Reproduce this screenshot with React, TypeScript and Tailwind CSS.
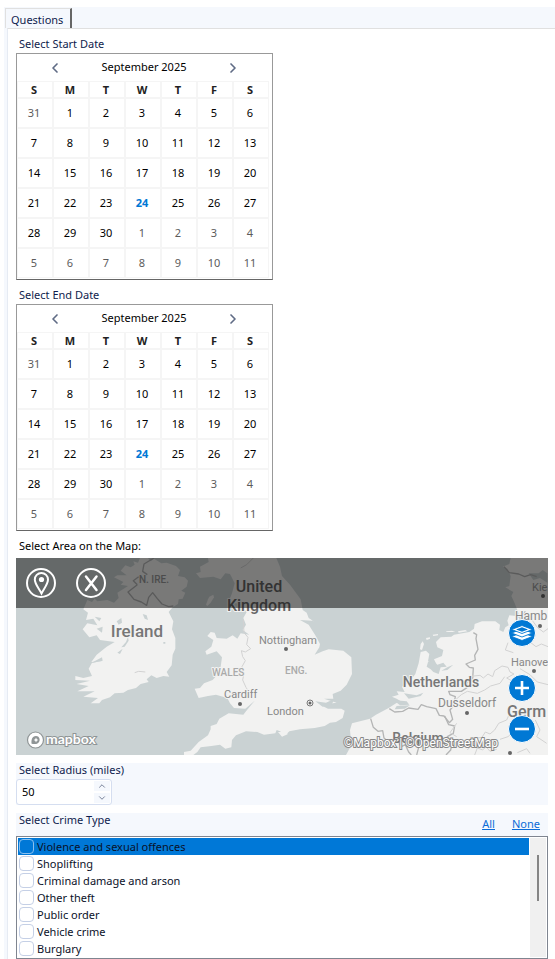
import { useState } from "react";
import { LuChevronDown, LuChevronLeft, LuChevronRight, LuChevronUp } from "react-icons/lu";

const WEEKDAYS = ["S", "M", "T", "W", "T", "F", "S"];
const WEEKS = [
  [31, 1, 2, 3, 4, 5, 6],
  [7, 8, 9, 10, 11, 12, 13],
  [14, 15, 16, 17, 18, 19, 20],
  [21, 22, 23, 24, 25, 26, 27],
  [28, 29, 30, 1, 2, 3, 4],
  [5, 6, 7, 8, 9, 10, 11],
];
const TODAY = 24;

const CRIMES = [
  "Violence and sexual offences",
  "Shoplifting",
  "Criminal damage and arson",
  "Other theft",
  "Public order",
  "Vehicle crime",
  "Burglary",
];

function dayStyle(week: number, day: number) {
  if ((week === 0 && day > 20) || (week > 3 && day < 15)) return "text-[#5c5c5c]";
  if (day === TODAY) return "font-bold text-[#0078d4]";
  return "text-black";
}

function Calendar({ label }: { label: string }) {
  return (
    <section aria-label={label}>
      <h2 className="px-[3px] pt-[7px] pb-px leading-4">{label}</h2>
      <div className="w-[257px] border border-[#999] border-b-[#666] pb-px">
        <div className="flex h-[27px] items-center justify-between pr-[31px] pl-[30px]">
          <button aria-label="Previous month" className="text-[#5f6b85]">
            <LuChevronLeft className="size-4" strokeWidth={2.5} />
          </button>
          <span className="text-black">September 2025</span>
          <button aria-label="Next month" className="text-[#5f6b85]">
            <LuChevronRight className="size-4" strokeWidth={2.5} />
          </button>
        </div>
        <table className="w-[252px] table-fixed border-separate border-spacing-0 text-center">
          <thead>
            <tr>
              {WEEKDAYS.map((day, i) => (
                <th key={i} className="h-[17px] border border-[#f5f5f5] p-0 pr-0.5 leading-[15px] font-bold text-[#222]">
                  {day}
                </th>
              ))}
            </tr>
          </thead>
          <tbody>
            {WEEKS.map((week, w) => (
              <tr key={w}>
                {week.map((day) => (
                  <td key={day} className="h-[30px] border border-[#f5f5f5] p-0 pr-0.5">
                    <button className={`h-7 w-full ${dayStyle(w, day)}`}>{day}</button>
                  </td>
                ))}
              </tr>
            ))}
          </tbody>
        </table>
      </div>
    </section>
  );
}

function MapDrawing() {
  return (
    <svg
      viewBox="0 0 532 197"
      preserveAspectRatio="xMidYMid slice"
      className="block h-full w-full bg-[#cad2d3]"
      fontFamily="Roboto, sans-serif"
      role="img"
      aria-label="Map of the British Isles and the Low Countries"
    >
      <g transform="translate(-16 -8) scale(0.33333)">
        <g fill="#f2f2f1">
          {/* Ireland */}
          <path d="M370 96L342 82L352 76L380 76L362 62L376 46L392 52L404 44L400 34L414 38L420 24H444L452 34L462 26L484 40L500 38L528 48L540 60L534 78L554 82L564 92L560 110L544 122L556 128L548 146L536 148L534 162L518 172L506 186L520 214L516 238L526 264L526 296L518 314L515 346L500 366L508 380L490 378L470 384L454 376L440 388L446 396L422 402L408 414L384 420L370 428L344 430L330 442L306 450L298 460L272 460L294 444L250 440L284 424L232 424L266 408L230 402L270 392L226 390V378L250 384L276 378L266 356L276 338L310 332L274 336L290 314L320 290L344 276L300 270L290 256L268 262L248 238L262 220L292 226L280 206L258 210L264 188L250 178L262 150L276 156L284 146L292 154L322 150L342 158L356 144L352 128L384 108L362 104Z" />
          {/* Scotland, England and Wales */}
          <path d="M600 84L588 70L602 66L600 50L626 36L624 24H829L840 50L846 78L870 104L886 126L902 148L908 180L920 188L926 204L944 216L938 212L900 210L926 224L946 256L960 282L958 292L944 314L968 304L986 298L1030 302L1054 322L1056 372L1040 404L1022 422L998 432L1000 446L972 446L1010 458L960 464L984 476L1024 476L1034 482L1028 504L1008 516L990 518L974 528L944 534L900 538L868 544L856 556L840 544L830 540L826 550L792 554L772 546L738 544L708 556L696 570L694 592L676 596L660 584L634 588L602 592L592 606L580 615H552L552 606L572 602L596 576L624 556L632 538L632 528L650 522L658 506L686 490L730 494L738 484L764 452L736 476L702 474L690 460L682 444L648 434L624 438L596 444L584 416L600 414L612 400L638 390L652 374L662 350L666 322L650 304L620 314L616 304L634 290L640 270L622 258L632 246L644 248L650 264L680 266L698 256L712 266L722 250L748 254L728 240L738 224L730 204L740 186L716 160L684 160L696 130L704 100L690 72L676 70L662 88L640 80Z" />
          <path d="M624 148L628 140L640 134L642 142L632 158L622 168L618 164Z" />
          {/* Continent */}
          <path d="M1038 615L1054 586L1050 540L1056 520L1110 506L1128 494L1166 474L1200 452L1190 446L1176 440L1196 434L1190 424L1214 426L1206 410L1226 398L1246 372L1256 340L1262 306L1278 302L1288 312L1284 334L1310 344L1302 328L1326 318L1330 300L1312 292L1308 276L1322 262L1354 260L1362 254L1408 246L1422 236L1424 222L1446 214L1486 214L1500 224L1498 240L1510 246L1516 232L1526 226L1522 212L1528 196L1548 198L1562 208L1552 180L1544 160L1534 138L1540 126L1516 112L1528 108L1532 78L1522 56L1508 50L1528 42L1532 24H1662V615Z" />
          <path d="M1262 282L1268 274L1272 282L1266 300L1260 298ZM1278 264L1290 262V266L1280 270ZM1298 254L1314 252V256L1300 258ZM1338 244L1356 242L1366 246H1340ZM1374 244L1396 240L1402 244L1376 248Z" />
          <path d="M834 546L856 546L864 552L846 560Z" />
        </g>
        {/* Inland water */}
        <g fill="#cad2d3">
          <path d="M1284 336L1298 330L1312 344L1330 338L1340 350L1322 352L1316 372L1300 366L1292 358L1280 350Z" />
          <path d="M1180 450L1220 454L1228 464L1200 466ZM1190 468L1230 466L1214 476L1184 478ZM1212 430L1250 436L1270 428L1262 438L1226 446ZM1360 344L1342 360L1324 362L1342 352Z" />
          <path d="M352 308L368 296L360 312ZM364 292L378 276L384 260L386 272L374 290ZM350 214L364 204L366 218L356 224ZM428 192L440 196L444 210L434 206ZM290 236L308 230L306 248ZM284 200L304 204L298 214ZM272 340L306 322L308 332ZM490 276H496V281H490ZM946 454L978 458L1004 446L996 462L968 470ZM1586 70L1600 90L1620 84L1642 98V70L1628 60L1616 70Z" />
        </g>
        {/* Borders */}
        <g fill="none" stroke="#b4b5b5" strokeWidth="4" strokeLinejoin="round">
          <path d="M462 24L432 42L428 64L442 74M412 104L400 92L416 80M412 104L384 126L402 148L424 156L440 166L446 142L458 128L472 146L486 162L506 170L520 168" />
          <path d="M1420 248L1430 254L1428 266L1434 298L1424 316L1426 330L1398 342L1408 352L1420 354L1418 386L1400 398L1402 412L1384 424L1346 424L1350 434L1366 440L1360 468L1350 480L1358 508L1348 518L1332 498L1318 496L1308 476L1280 470L1264 464L1254 478L1226 474L1208 484L1184 486L1168 476" />
          <path d="M1112 506L1120 532L1134 544L1148 542L1152 564L1166 576L1190 570L1204 590L1216 584L1226 606L1234 615M1250 615L1256 592L1276 582M1334 498L1346 524L1364 528L1360 550L1342 560L1356 580L1352 600L1338 615" />
          <path d="M1512 50L1528 68L1556 72L1574 80L1592 74L1610 80M1576 184L1568 196L1560 208" />
        </g>
        <g fill="none" stroke="#d2d2d2" strokeWidth="3" strokeLinejoin="round">
          <path d="M760 24L740 44L722 54M730 210L732 248L744 262L740 284L752 296L736 306L724 302L728 320L736 332L726 350L732 370L728 390L738 412L748 428M404 368L416 364L436 366M1404 380L1440 376L1450 384L1464 372L1478 380L1484 362L1506 348L1524 352L1530 366L1542 372L1520 384L1538 394L1530 402M1366 450L1384 434L1402 424L1432 430L1454 420L1472 408L1500 400L1514 380M1370 520L1350 548L1370 560M1402 600L1420 580L1418 566L1446 562L1456 546L1470 552L1484 540L1496 520L1520 510L1528 492M1424 615L1432 594L1448 600L1458 590L1470 604L1490 598M1500 568L1524 560L1540 546L1552 524M1552 608L1580 596L1590 610M1596 210L1612 232L1630 246L1644 236M1590 276L1608 290L1624 282L1644 290M1560 356L1590 374L1612 396L1644 404M1524 278L1516 300L1540 308M1606 510L1620 540L1610 560L1640 580" />
        </g>
      </g>
      <g fill="#777" stroke="#f2f2f1" strokeWidth="2" strokeLinejoin="round" paintOrder="stroke">
        <g fontSize="16" fontWeight="500" textAnchor="middle">
          <text x="121" y="79" fontSize="17">Ireland</text>
          <g fill="#666">
            <text x="243" y="34">United</text>
            <text x="243" y="53">Kingdom</text>
          </g>
          <text x="425" y="129" fontSize="14">Netherlands</text>
          <text x="402" y="185" fontSize="14">Belgium</text>
          <text x="491" y="159" fontSize="16" textAnchor="start">Germ</text>
        </g>
        <g fontSize="11" fill="#888">
          <text x="243" y="86">Nottingham</text>
          <text x="208" y="140">Cardiff</text>
          <text x="251" y="157">London</text>
          <text x="422" y="149" fontSize="12">Dusseldorf</text>
          <text x="495" y="108">Hanove</text>
          <text x="499" y="62" fontSize="12">Hamb</text>
        </g>
        <g fontSize="10" fontWeight="500" fill="#aaa">
          <text x="196" y="118">WALES</text>
          <text x="269" y="116">ENG.</text>
        </g>
      </g>
      <g fill="#999">
        <text x="123" y="25" fontSize="10" fontWeight="500">N. IRE.</text>
        <text x="516" y="33" fontSize="11">Kie</text>
      </g>
      <g fill="#666">
        <circle cx="270" cy="91" r="2" />
        <circle cx="224" cy="146" r="2" />
        <circle cx="451" cy="155" r="2" />
        <circle cx="518" cy="113" r="2" />
        <circle cx="524" cy="68" r="2" />
        <circle cx="527" cy="38" r="2" />
        <circle cx="494" cy="195" r="2" />
        <circle cx="294" cy="145" r="1.5" />
        <circle cx="294" cy="145" r="3" fill="none" stroke="#777" />
      </g>
    </svg>
  );
}

function CrimeMap() {
  return (
    <div className="relative h-[197px] overflow-hidden">
      <MapDrawing />
      <div className="absolute inset-x-0 top-0 flex h-[50px] items-center gap-5 bg-black/50 px-2.5">
        <button aria-label="Drop a pin">
          <svg viewBox="0 0 30 30" className="size-[30px]" fill="none" stroke="#fff" strokeWidth="2">
            <circle cx="15" cy="15" r="14" />
            <path d="M15.500 25.500C13 20.500 8.800 16 8.800 11.500A6.500 6.500 0 0 1 22 11.500C22 16 18 20.500 15.500 25.500Z" />
            <circle cx="15.500" cy="11.500" r="2.600" fill="#fff" stroke="none" />
          </svg>
        </button>
        <button aria-label="Clear the pin">
          <svg viewBox="0 0 30 30" className="size-[30px]" fill="none" stroke="#fff" strokeWidth="2" strokeLinecap="round">
            <circle cx="15" cy="15" r="14" />
            <path strokeWidth="2.500" d="M10 8.500L20.500 22M20.500 8.500L10 22" />
          </svg>
        </button>
      </div>
      <div className="absolute top-[61px] right-3 flex flex-col">
        <button aria-label="Layers">
          <svg viewBox="0 0 28 28" className="size-7">
            <circle cx="14" cy="14" r="13.500" fill="#0078d4" stroke="#fff" />
            <g fill="#fff" stroke="#0078d4" strokeWidth="0.900">
              <path d="M3.500 17.500L14 13.500L24.500 17.500L14 21.500Z" />
              <path d="M3.500 14L14 10L24.500 14L14 18Z" />
              <path d="M3.500 10.500L14 6.500L24.500 10.500L14 14.500Z" />
              <path d="M8 10.500L14 8.300L20 10.500L14 12.700Z" fill="#0078d4" stroke="none" />
            </g>
          </svg>
        </button>
        <button aria-label="Zoom in" className="mt-[27px]">
          <svg viewBox="0 0 28 28" className="size-7">
            <circle cx="14" cy="14" r="13.500" fill="#0078d4" stroke="#fff" />
            <path d="M7 14H21M14 7V21" stroke="#fff" strokeWidth="2.600" />
          </svg>
        </button>
        <button aria-label="Zoom out" className="mt-[13px]">
          <svg viewBox="0 0 28 28" className="size-7">
            <circle cx="14" cy="14" r="13.500" fill="#0078d4" stroke="#fff" />
            <path d="M7 14H21" stroke="#fff" strokeWidth="2.600" />
          </svg>
        </button>
      </div>
      <svg viewBox="0 0 74 20" className="absolute bottom-[5px] left-2.5 h-5 w-[74px]" aria-label="mapbox" role="img">
        <circle cx="9.500" cy="10" r="8" fill="#fff" stroke="#8f9596" strokeWidth="1.200" />
        <path d="M5.600 13.800C5 10 6 6.200 10 6C14 6.200 14.600 10.800 12.200 12.900C10.500 14.200 8 14.200 5.600 13.800Z" fill="#8f9596" />
        <path d="M10 7.600L10.800 9.200L12.400 10L10.800 10.800L10 12.400L9.200 10.800L7.600 10L9.200 9.200Z" fill="#fff" />
        <text
          x="20"
          y="14"
          fontSize="14"
          fontWeight="700"
          fontFamily="Lato, sans-serif"
          fill="#fff"
          stroke="#8f9596"
          strokeWidth="2"
          paintOrder="stroke"
        >
          mapbox
        </text>
      </svg>
      <p className="absolute right-[50px] bottom-1 font-['Roboto',sans-serif] text-[12px] leading-4 text-white [paint-order:stroke] [-webkit-text-stroke:2px_#888]">
        ©Mapbox | ©OpenStreetMap
      </p>
    </div>
  );
}

export default function App() {
  const [radius, setRadius] = useState(50);
  const [checked, setChecked] = useState<string[]>([]);

  function toggle(crime: string) {
    setChecked((prev) => (prev.includes(crime) ? prev.filter((c) => c !== crime) : [...prev, crime]));
  }

  return (
    <div className="flex min-h-screen flex-col bg-white pt-[7px] pl-1 font-['Noto_Sans','Open_Sans',sans-serif] text-[11px] text-[#0f1c4d]">
      <div role="tablist" className="flex h-[21px] items-end bg-[#f5f8fd] pl-px">
        <button
          role="tab"
          aria-selected="true"
          className="h-5 border-t border-r-2 border-l border-t-[#e0e0e0] border-r-[#666] border-l-[#e0e0e0] pr-[7px] pl-[5px] leading-[22px]"
        >
          Questions
        </button>
      </div>

      <div className="flex flex-1 bg-[#f5f8fd] pl-[3px]">
        <main className="min-w-0 flex-1 border-t border-l border-t-[#e0e0e0] border-l-[#e6ebf3] bg-white pr-[7px] pl-2">
          <Calendar label="Select Start Date" />
          <Calendar label="Select End Date" />

          <h2 className="px-[3px] pt-[7px] pb-1 leading-4 text-black">Select Area on the Map:</h2>
          <CrimeMap />

          <section className="mt-2 bg-[#f5f8fd]">
            <label htmlFor="radius" className="block px-[3px] pb-0.5 leading-[14px]">
              Select Radius (miles)
            </label>
            <div className="flex h-[26px] w-24 items-center rounded-[3px] border border-[#d5def0] bg-white pr-px">
              <input
                id="radius"
                type="text"
                inputMode="numeric"
                value={radius}
                onChange={(e) => setRadius(Number(e.target.value) || 0)}
                className="min-w-0 flex-1 bg-transparent pl-[5px] leading-4 text-black outline-none"
              />
              <div className="flex w-4 flex-col gap-0.5 text-[#5f6b85]">
                <button
                  aria-label="Increase radius"
                  onClick={() => setRadius(radius + 1)}
                  className="flex h-2.5 items-center justify-center bg-[#f5f8fd]"
                >
                  <LuChevronUp className="size-2.5" />
                </button>
                <button
                  aria-label="Decrease radius"
                  onClick={() => setRadius(radius - 1)}
                  className="flex h-2.5 items-center justify-center bg-[#f5f8fd]"
                >
                  <LuChevronDown className="size-2.5" />
                </button>
              </div>
            </div>
          </section>

          <section className="mt-2">
            <div className="flex h-[23px] justify-between bg-[#f5f8fd] pr-2 pl-[3px]">
              <h2 className="leading-[14px]">Select Crime Type</h2>
              <div className="flex gap-[17px] pt-1 leading-[14px] text-[#0b6cd8] underline">
                <a href="#all" onClick={() => setChecked(CRIMES)}>
                  All
                </a>
                <a href="#none" onClick={() => setChecked([])}>
                  None
                </a>
              </div>
            </div>
            <div className="flex border border-[#7f8590] p-px">
              <ul className="flex-1 text-[#0a1128]">
                {CRIMES.map((crime, i) => (
                  <li key={crime} className={i === 0 ? "bg-[#0078d7]" : ""}>
                    <label className="flex h-[17px] items-center gap-[3px] pl-px leading-[17px]">
                      <input
                        type="checkbox"
                        checked={checked.includes(crime)}
                        onChange={() => toggle(crime)}
                        className={`size-[15px] appearance-none rounded-[4px] border checked:bg-[#5f9ee6] ${
                          i === 0 ? "border-[#8cc0ee]" : "border-[#c5d0e6] bg-white"
                        }`}
                      />
                      {crime}
                    </label>
                  </li>
                ))}
              </ul>
              <div className="ml-px w-4 bg-[#f0f0f0] pt-[17px]">
                <div className="mx-auto h-[46px] w-0.5 bg-[#858585]" />
              </div>
            </div>
          </section>
        </main>
      </div>
    </div>
  );
}
